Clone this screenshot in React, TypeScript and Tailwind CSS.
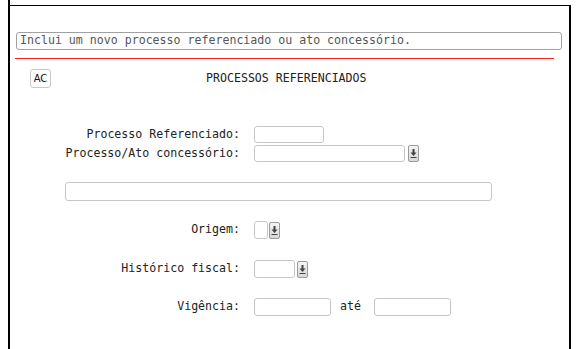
import React from 'react';

const mono = "font-['DejaVu_Sans_Mono',monospace] text-[11.6px] leading-none";

function DropButton({ gap }: { gap: number }) {
    return (
        <span
            className="flex h-[17px] w-[11px] items-center justify-center rounded-[2px] border border-[#9a9a9a] bg-gradient-to-b from-[#f4f4f4] to-[#d8d8d8]"
            style={{ marginLeft: gap }}
        >
            <svg width="7" height="11" viewBox="0 0 7 11">
                <path d="M2.5 1h2v3.5h2L3.5 8 0.5 4.5h2z" fill="#444" />
                <rect x="0.5" y="9" width="6" height="1" fill="#444" />
            </svg>
        </span>
    );
}

function Row({ label, children, className }: { label: string; children: React.ReactNode; className?: string }) {
    return (
        <div className={`flex items-center ${className ?? ''}`}>
            <span className={`${mono} w-[230px] text-right text-[#222]`}>{label}</span>
            <div className="ml-[14px] flex items-center">{children}</div>
        </div>
    );
}

export default function App() {
    return (
        <div className="h-[349px] w-[577px] overflow-hidden bg-white pl-[8px] pr-[6px]">
            <div className="h-full border-l-2 border-black pt-[5px]">
                <div className="h-full border-t border-r-2 border-black">
                    {/* Description */}
                    <div className="ml-[6px] mt-[26px] flex h-[18px] w-[546px] items-center rounded-[3px] border border-[#a0a0a0] px-[3px]">
                        <span className={`${mono} text-[#555]`}>Inclui um novo processo referenciado ou ato concessório.</span>
                    </div>
                    <div className="ml-[5px] mt-[8px] h-px w-[539px] bg-[#ff2020]" />

                    {/* Header */}
                    <div className="mt-[10px] flex items-center">
                        <button className="ml-[20px] flex h-[19px] w-[21px] items-center justify-center rounded-[3px] border border-[#c8c8c8] bg-white font-['DejaVu_Sans',sans-serif] text-[10px] text-[#111]">
                            AC
                        </button>
                        <span className={`${mono} ml-[155px] text-[#222]`}>PROCESSOS REFERENCIADOS</span>
                    </div>

                    {/* Form */}
                    <Row label="Processo Referenciado:" className="mt-[38px]">
                        <span className="block h-[17px] w-[70px] rounded-[3px] border border-[#c6c6c6]" />
                    </Row>
                    <Row label="Processo/Ato concessório:" className="mt-[2px]">
                        <span className="block h-[17px] w-[151px] rounded-[3px] border border-[#c6c6c6]" />
                        <DropButton gap={3} />
                    </Row>

                    <div className="ml-[55px] mt-[20px] h-[19px] w-[427px] rounded-[3px] border border-[#c6c6c6]" />

                    <Row label="Origem:" className="mt-[20px]">
                        <span className="block h-[18px] w-[14px] rounded-[3px] border border-[#c6c6c6]" />
                        <DropButton gap={1} />
                    </Row>
                    <Row label="Histórico fiscal:" className="mt-[21px]">
                        <span className="block h-[18px] w-[41px] rounded-[3px] border border-[#c6c6c6]" />
                        <DropButton gap={2} />
                    </Row>
                    <Row label="Vigência:" className="mt-[20px]">
                        <span className="block h-[18px] w-[77px] rounded-[3px] border border-[#c6c6c6]" />
                        <span className={`${mono} ml-[9px] text-[#222]`}>até</span>
                        <span className="ml-[13px] block h-[18px] w-[77px] rounded-[3px] border border-[#c6c6c6]" />
                    </Row>
                </div>
            </div>
        </div>
    );
}
